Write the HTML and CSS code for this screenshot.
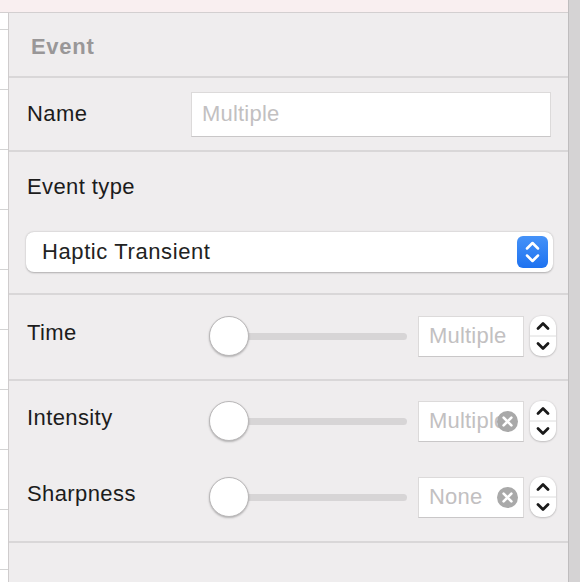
FILE: index.html
```html
<!DOCTYPE html>
<html>
<head>
<meta charset="utf-8">
<link rel="stylesheet" href="styles.css">
</head>
<body>
<div class="screen">
  <div class="main">
    <div class="topbar"></div>
    <div class="body">
      <div class="sidestrip"></div>
      <div class="panel">
        <div class="header">Event</div>
        <div class="section name-section">
          <span class="label">Name</span>
          <div class="textfield"><span class="placeholder">Multiple</span></div>
        </div>
        <div class="section type-section">
          <span class="label">Event type</span>
          <div class="popup">
            <span class="popup-text">Haptic Transient</span>
            <span class="popup-btn">
              <svg width="31" height="32" viewBox="0 0 31 32"><path d="M10 12.5 L15.5 7 L21 12.5 M10 19.5 L15.5 25 L21 19.5" fill="none" stroke="#fff" stroke-width="2.5" stroke-linecap="round" stroke-linejoin="round"/></svg>
            </span>
          </div>
        </div>
        <div class="section time-section">
          <div class="param-row">
            <span class="label param-label">Time</span>
            <div class="slider"><div class="track"></div><div class="knob"></div></div>
            <div class="numfield"><span class="placeholder">Multiple</span></div>
            <div class="stepper">
              <svg width="26" height="40" viewBox="0 0 26 40"><path d="M8 12.5 L13 7.5 L18 12.5 M8 27.5 L13 32.5 L18 27.5" fill="none" stroke="#1a1a1a" stroke-width="2.8" stroke-linecap="round" stroke-linejoin="round"/><line x1="0" y1="20" x2="26" y2="20" stroke="#dcdcdc" stroke-width="1"/></svg>
            </div>
          </div>
        </div>
        <div class="section pair-section">
          <div class="param-row">
            <span class="label param-label">Intensity</span>
            <div class="slider"><div class="track"></div><div class="knob"></div></div>
            <div class="numfield"><span class="placeholder">Multiple</span>
              <span class="clear"><svg width="21" height="21" viewBox="0 0 20 20"><circle cx="10" cy="10" r="10" fill="#a9a9a9"/><path d="M6.3 6.3 L13.7 13.7 M13.7 6.3 L6.3 13.7" stroke="#fff" stroke-width="2.5" stroke-linecap="round"/></svg></span>
            </div>
            <div class="stepper">
              <svg width="26" height="40" viewBox="0 0 26 40"><path d="M8 12.5 L13 7.5 L18 12.5 M8 27.5 L13 32.5 L18 27.5" fill="none" stroke="#1a1a1a" stroke-width="2.8" stroke-linecap="round" stroke-linejoin="round"/><line x1="0" y1="20" x2="26" y2="20" stroke="#dcdcdc" stroke-width="1"/></svg>
            </div>
          </div>
          <div class="param-row">
            <span class="label param-label">Sharpness</span>
            <div class="slider"><div class="track"></div><div class="knob"></div></div>
            <div class="numfield"><span class="placeholder">None</span>
              <span class="clear"><svg width="21" height="21" viewBox="0 0 20 20"><circle cx="10" cy="10" r="10" fill="#a9a9a9"/><path d="M6.3 6.3 L13.7 13.7 M13.7 6.3 L6.3 13.7" stroke="#fff" stroke-width="2.5" stroke-linecap="round"/></svg></span>
            </div>
            <div class="stepper">
              <svg width="26" height="40" viewBox="0 0 26 40"><path d="M8 12.5 L13 7.5 L18 12.5 M8 27.5 L13 32.5 L18 27.5" fill="none" stroke="#1a1a1a" stroke-width="2.8" stroke-linecap="round" stroke-linejoin="round"/><line x1="0" y1="20" x2="26" y2="20" stroke="#dcdcdc" stroke-width="1"/></svg>
            </div>
          </div>
        </div>
        <div class="rest"></div>
      </div>
    </div>
  </div>
  <div class="scrollcol"></div>
</div>
</body>
</html>
```

FILE: styles.css
```css
* { box-sizing: border-box; }
html, body { margin: 0; padding: 0; }
body {
  width: 580px;
  height: 582px;
  overflow: hidden;
  font-family: "Liberation Sans", Arial, sans-serif;
  background: #efedee;
}
.screen {
  display: flex;
  width: 580px;
  height: 582px;
}
.main {
  flex: 1;
  display: flex;
  flex-direction: column;
  min-width: 0;
}
.topbar {
  height: 13px;
  flex: none;
  background: #f9eff0;
  border-bottom: 1px solid #d3cfd0;
}
.body {
  flex: 1;
  display: flex;
  min-height: 0;
}
.sidestrip {
  width: 9px;
  flex: none;
  background: repeating-linear-gradient(to bottom, #ffffff 0 16px, #d4d4d4 16px 17px, #ffffff 17px 60px);
  border-right: 1px solid #cfcccd;
}
.panel {
  flex: 1;
  display: flex;
  flex-direction: column;
  background: #efedee;
  min-width: 0;
}
.scrollcol {
  width: 12px;
  flex: none;
  background: #d5d3d4;
  border-left: 1px solid #bfbdbe;
}
.header {
  height: 65px;
  flex: none;
  padding: 21px 0 0 22px;
  font-weight: bold;
  font-size: 22px;
  letter-spacing: 0.7px;
  color: #999798;
  border-bottom: 2px solid #d9d7d8;
}
.section {
  flex: none;
  border-bottom: 2px solid #d9d7d8;
}
.label {
  font-size: 22px;
  color: #1c1c1c;
  letter-spacing: 0.4px;
  line-height: 28px;
}
.placeholder {
  font-size: 22px;
  color: #c2c0c1;
  line-height: 28px;
  white-space: nowrap;
  letter-spacing: 0.2px;
}
.name-section {
  height: 74px;
  display: flex;
  align-items: center;
  justify-content: space-between;
  padding: 0 17px 0 18px;
}
.textfield {
  width: 360px;
  height: 45px;
  background: #fff;
  border: 1px solid #dcdada;
  border-bottom-color: #c9c7c8;
  display: flex;
  align-items: center;
  padding-left: 10px;
}
.type-section {
  height: 143px;
  display: flex;
  flex-direction: column;
  padding: 21px 15px 0 17px;
}
.type-section .label {
  padding-left: 1px;
}
.popup {
  margin-top: 31px;
  height: 40px;
  background: #fff;
  border-radius: 8px;
  box-shadow: 0 0.5px 2px rgba(0,0,0,0.28);
  display: flex;
  align-items: center;
  justify-content: space-between;
  padding: 0 5px 0 16px;
}
.popup-text {
  font-size: 22px;
  color: #222;
  letter-spacing: 0.6px;
}
.popup-btn {
  width: 31px;
  height: 32px;
  border-radius: 6px;
  background: linear-gradient(to bottom, #4592f8, #1e72f0);
  display: flex;
}
.time-section {
  height: 86px;
  display: flex;
  flex-direction: column;
  justify-content: center;
  padding-bottom: 2px;
}
.pair-section {
  height: 162px;
  display: flex;
  flex-direction: column;
  padding-top: 2px;
}
.pair-section .param-row {
  height: 76px;
}
.param-row {
  display: flex;
  align-items: center;
  padding: 0 11px 0 18px;
}
.param-label {
  width: 182px;
  flex: none;
  padding-bottom: 7px;
}
.slider {
  position: relative;
  width: 198px;
  height: 40px;
  flex: none;
}
.track {
  position: absolute;
  left: 20px;
  right: 0;
  top: 17px;
  height: 7px;
  border-radius: 4px;
  background: #d7d5d6;
}
.knob {
  position: relative;
  width: 40px;
  height: 40px;
  border-radius: 50%;
  background: #fff;
  border: 1px solid #b9b7b8;
  box-shadow: 0 1px 2px rgba(0,0,0,0.25);
}
.numfield {
  position: relative;
  margin-left: 11px;
  width: 106px;
  height: 41px;
  background: #fff;
  border: 1px solid #dcdada;
  border-bottom-color: #c9c7c8;
  display: flex;
  align-items: center;
  padding-left: 10px;
  overflow: hidden;
}
.clear {
  position: absolute;
  right: 5px;
  top: 9px;
  width: 21px;
  height: 21px;
  display: flex;
}
.stepper {
  margin-left: 6px;
  width: 26px;
  height: 40px;
  border-radius: 11px;
  background: #fff;
  box-shadow: 0 0.5px 2px rgba(0,0,0,0.3);
  display: flex;
  overflow: hidden;
}
.rest {
  flex: 1;
}
```
